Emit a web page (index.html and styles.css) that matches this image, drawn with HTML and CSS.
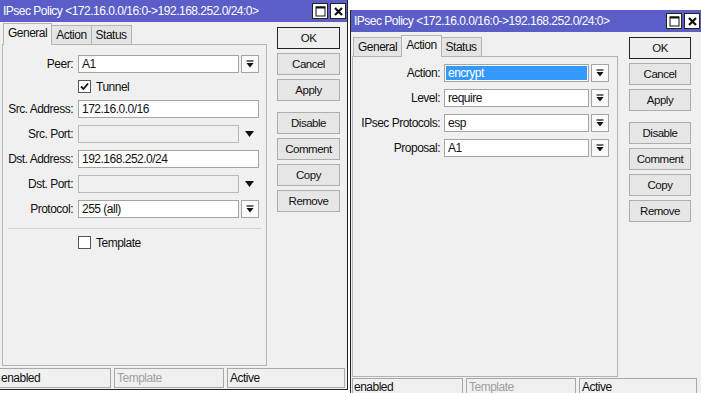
FILE: index.html
```html
<!DOCTYPE html>
<html lang="en">
<head>
    <meta charset="UTF-8">
    <title>IPsec Policy</title>
    <link rel="stylesheet" href="styles.css">
</head>
<body>
    <div class="desk">
        <!-- General tab window -->
        <div class="window win-left">
            <div class="titlebar">
                <span class="title">IPsec Policy &lt;172.16.0.0/16:0-&gt;192.168.252.0/24:0&gt;</span>
                <span class="tb-btns">
                    <span class="tb-btn"><svg width="11" height="11" viewBox="0 0 11 11"><rect x="1" y="1" width="9" height="9" fill="none" stroke="#111" stroke-width="1"/><line x1="1" y1="1.5" x2="10" y2="1.5" stroke="#111" stroke-width="2"/></svg></span>
                    <span class="tb-btn"><svg width="11" height="11" viewBox="0 0 11 11"><path d="M2 2 L9 9 M9 2 L2 9" stroke="#111" stroke-width="2.2"/></svg></span>
                </span>
            </div>
            <div class="win-body">
                <div class="main">
                    <div class="tabs">
                        <span class="tab active">General</span>
                        <span class="tab">Action</span>
                        <span class="tab">Status</span>
                    </div>
                    <div class="panel panel-general">
                        <div class="form form-general">
                            <label class="lbl">Peer:</label>
                            <div class="field"><span class="input">A1</span><span class="dd"><svg width="8" height="8" viewBox="0 0 8 8"><path d="M0.5 1 H7.5" stroke="#111" stroke-width="1.2"/><path d="M0.5 3 H7.5 L4 7.5 Z" fill="#111"/></svg></span></div>

                            <span></span>
                            <div class="check-row"><span class="cb checked"><svg width="11" height="11" viewBox="0 0 11 11"><path d="M2 5.5 L4.5 8 L9 2.5" fill="none" stroke="#111" stroke-width="1.8"/></svg></span>Tunnel</div>

                            <label class="lbl">Src. Address:</label>
                            <div class="field"><span class="input">172.16.0.0/16</span></div>

                            <label class="lbl">Src. Port:</label>
                            <div class="field"><span class="input disabled"></span><span class="dd-flat"><svg width="9" height="6" viewBox="0 0 9 6"><path d="M0 0 H9 L4.5 6 Z" fill="#111"/></svg></span></div>

                            <label class="lbl">Dst. Address:</label>
                            <div class="field"><span class="input">192.168.252.0/24</span></div>

                            <label class="lbl">Dst. Port:</label>
                            <div class="field"><span class="input disabled"></span><span class="dd-flat"><svg width="9" height="6" viewBox="0 0 9 6"><path d="M0 0 H9 L4.5 6 Z" fill="#111"/></svg></span></div>

                            <label class="lbl">Protocol:</label>
                            <div class="field"><span class="input">255 (all)</span><span class="dd"><svg width="8" height="8" viewBox="0 0 8 8"><path d="M0.5 1 H7.5" stroke="#111" stroke-width="1.2"/><path d="M0.5 3 H7.5 L4 7.5 Z" fill="#111"/></svg></span></div>
                        </div>
                        <div class="separator"></div>
                        <div class="form form-general">
                            <span></span>
                            <div class="check-row"><span class="cb"></span>Template</div>
                        </div>
                    </div>
                </div>
                <div class="buttons">
                    <span class="btn default">OK</span>
                    <span class="btn">Cancel</span>
                    <span class="btn">Apply</span>
                    <span class="btn spaced">Disable</span>
                    <span class="btn">Comment</span>
                    <span class="btn">Copy</span>
                    <span class="btn">Remove</span>
                </div>
            </div>
            <div class="statusbar">
                <span class="cell cell-1">enabled</span>
                <span class="cell cell-2 muted">Template</span>
                <span class="cell cell-3">Active</span>
            </div>
        </div>

        <!-- Action tab window -->
        <div class="window win-right">
            <div class="titlebar">
                <span class="title">IPsec Policy &lt;172.16.0.0/16:0-&gt;192.168.252.0/24:0&gt;</span>
                <span class="tb-btns">
                    <span class="tb-btn"><svg width="11" height="11" viewBox="0 0 11 11"><rect x="1" y="1" width="9" height="9" fill="none" stroke="#111" stroke-width="1"/><line x1="1" y1="1.5" x2="10" y2="1.5" stroke="#111" stroke-width="2"/></svg></span>
                    <span class="tb-btn"><svg width="11" height="11" viewBox="0 0 11 11"><path d="M2 2 L9 9 M9 2 L2 9" stroke="#111" stroke-width="2.2"/></svg></span>
                </span>
            </div>
            <div class="win-body">
                <div class="main">
                    <div class="tabs">
                        <span class="tab">General</span>
                        <span class="tab active">Action</span>
                        <span class="tab">Status</span>
                    </div>
                    <div class="panel panel-action">
                        <div class="form form-action">
                            <label class="lbl">Action:</label>
                            <div class="field"><span class="input selected">encrypt</span><span class="dd"><svg width="8" height="8" viewBox="0 0 8 8"><path d="M0.5 1 H7.5" stroke="#111" stroke-width="1.2"/><path d="M0.5 3 H7.5 L4 7.5 Z" fill="#111"/></svg></span></div>

                            <label class="lbl">Level:</label>
                            <div class="field"><span class="input">require</span><span class="dd"><svg width="8" height="8" viewBox="0 0 8 8"><path d="M0.5 1 H7.5" stroke="#111" stroke-width="1.2"/><path d="M0.5 3 H7.5 L4 7.5 Z" fill="#111"/></svg></span></div>

                            <label class="lbl">IPsec Protocols:</label>
                            <div class="field"><span class="input">esp</span><span class="dd"><svg width="8" height="8" viewBox="0 0 8 8"><path d="M0.5 1 H7.5" stroke="#111" stroke-width="1.2"/><path d="M0.5 3 H7.5 L4 7.5 Z" fill="#111"/></svg></span></div>

                            <label class="lbl">Proposal:</label>
                            <div class="field"><span class="input">A1</span><span class="dd"><svg width="8" height="8" viewBox="0 0 8 8"><path d="M0.5 1 H7.5" stroke="#111" stroke-width="1.2"/><path d="M0.5 3 H7.5 L4 7.5 Z" fill="#111"/></svg></span></div>
                        </div>
                    </div>
                </div>
                <div class="buttons">
                    <span class="btn default">OK</span>
                    <span class="btn">Cancel</span>
                    <span class="btn">Apply</span>
                    <span class="btn spaced">Disable</span>
                    <span class="btn">Comment</span>
                    <span class="btn">Copy</span>
                    <span class="btn">Remove</span>
                </div>
            </div>
            <div class="statusbar">
                <span class="cell cell-1">enabled</span>
                <span class="cell cell-2 muted">Template</span>
                <span class="cell cell-3">Active</span>
            </div>
        </div>
    </div>
</body>
</html>
```

FILE: styles.css
```css
/* winbox style dialogs, two side by side */
body { margin: 0; background: #ffffff; font-family: "Liberation Sans", Arial, sans-serif; font-size: 12px; letter-spacing: -0.5px; color: #111; }
.desk { display: flex; align-items: flex-start; width: 701px; height: 393px; overflow: hidden; }

.window { background: #f0f0f0; display: flex; flex-direction: column; box-sizing: border-box; flex-shrink: 0; }
.win-left { width: 348px; height: 390px; border-right: 1px solid #222; border-bottom: 1px solid #222; }
.win-right { width: 351px; height: 400px; margin-left: 2px; margin-top: 10px; border-left: 1px solid #222; }

.titlebar {
    height: 22px;
    background: #5b5ec7;
    color: #fff;
    display: flex;
    align-items: center;
    justify-content: space-between;
    padding: 0 1px 0 3px;
    flex-shrink: 0;
}
.title { font-size: 12px; letter-spacing: -0.5px; }
.tb-btns { display: flex; gap: 2px; }
.tb-btn {
    width: 16px;
    height: 16px;
    box-sizing: border-box;
    background: #fff;
    border: 1px solid #222;
    display: flex;
    align-items: center;
    justify-content: center;
}

.win-body { display: flex; flex-shrink: 0; }
.main { padding-left: 2px; }
.win-right .main { padding-left: 1px; }

.tabs { display: flex; align-items: flex-end; height: 21px; margin-top: 1px; padding-left: 1px; }
.win-right .tabs { margin-top: 3px; }
.tab {
    height: 19px;
    line-height: 18px;
    box-sizing: border-box;
    padding: 0 4px;
    border: 1px solid #b4b4b4;
    border-bottom: none;
    background: #e4e4e4;
    margin-right: -1px;
}
.tab.active {
    height: 22px;
    line-height: 19px;
    background: #f0f0f0;
    padding: 0 4px;
    margin-bottom: -1px;
    position: relative;
    z-index: 1;
}

.panel {
    width: 265px;
    height: 322px;
    box-sizing: border-box;
    border: 1px solid #b4b4b4;
    background: #f0f0f0;
}
.panel-general { padding: 10px 0 0 4px; }
.panel-action { width: 266px; height: 321px; padding: 7px 0 0 1px; }

.form { display: grid; column-gap: 5px; row-gap: 7px; align-items: center; }
.form-general { grid-template-columns: 66px 181px; }
.form-action { grid-template-columns: 86px 165px; column-gap: 4px; }

.lbl { text-align: right; line-height: 18px; white-space: nowrap; }

.field { display: flex; height: 18px; }
.input {
    flex: 1;
    height: 18px;
    box-sizing: border-box;
    border: 1px solid #a5a5a5;
    background: #fff;
    padding: 0 3px;
    line-height: 16px;
    white-space: nowrap;
    overflow: hidden;
}
.input.disabled { background: #f0f0f0; border-color: #b9b9b9; }
.input.selected { background: #3399ff; color: #fff; border: 1px solid #a5a5a5; box-shadow: inset 0 0 0 1px #fff; }
.dd {
    width: 18px;
    height: 18px;
    box-sizing: border-box;
    margin-left: 2px;
    border: 1px solid #a5a5a5;
    background: #fafafa;
    display: flex;
    align-items: center;
    justify-content: center;
}
.dd-flat { width: 20px; display: flex; align-items: center; justify-content: center; }

.check-row { display: flex; align-items: center; gap: 3px; height: 13px; }
.cb {
    width: 13px;
    height: 13px;
    box-sizing: border-box;
    border: 1px solid #555;
    background: #fff;
    display: flex;
    align-items: center;
    justify-content: center;
    margin-right: 2px;
}

.separator { height: 1px; background: #d4d4d4; margin: 10px 5px 7px 1px; }

.buttons { display: flex; flex-direction: column; gap: 4px; width: 63px; margin: 5px 0 0 10px; }
.win-right .buttons { width: 62px; margin: 5px 0 0 11px; }
.btn {
    height: 22px;
    box-sizing: border-box;
    border: 1px solid #adadad;
    background: #e6e6e6;
    text-align: center;
    line-height: 20px;
    font-size: 11.5px;
}
.btn.default { border-color: #222; background: #eeeeee; }
.btn.spaced { margin-top: 7px; }

.statusbar { display: flex; height: 20px; margin-top: 2px; gap: 3px; flex-shrink: 0; }
.win-right .statusbar { margin-top: 1px; }
.cell {
    height: 20px;
    box-sizing: border-box;
    border: 1px solid #a8a8a8;
    line-height: 18px;
    padding-left: 2px;
    background: #f0f0f0;
}
.win-right .cell { line-height: 16px; }
.cell-1 { width: 111px; border-left: none; padding-left: 1px; }
.cell-2 { width: 110px; }
.cell-3 { width: 118px; }
.win-right .cell-1 { width: 111px; border-left: 1px solid #a8a8a8; margin-left: 1px; }
.muted { color: #a0a0a0; }
```
